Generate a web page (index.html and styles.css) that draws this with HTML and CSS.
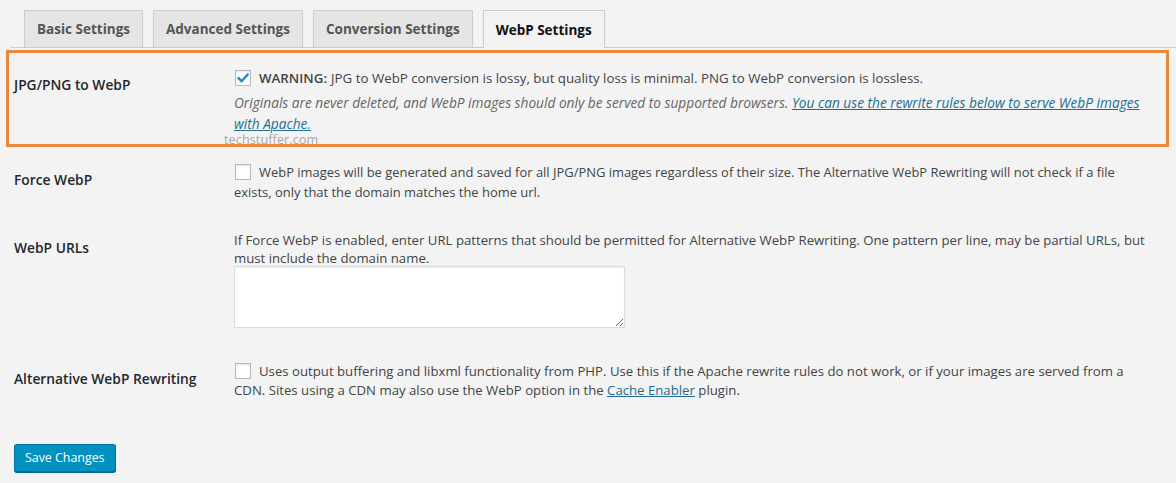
FILE: index.html
```html
<!DOCTYPE html>
<html lang="en">
<head>
<meta charset="utf-8">
<title>WebP Settings</title>
<link rel="stylesheet" href="styles.css">
</head>
<body>
<div class="page">
  <nav class="tabs">
    <a class="tab">Basic Settings</a>
    <a class="tab">Advanced Settings</a>
    <a class="tab">Conversion Settings</a>
    <a class="tab tab-active">WebP Settings</a>
  </nav>

  <div class="row row-highlight">
    <div class="label label-1">JPG/PNG to WebP</div>
    <div class="field field-1">
      <p class="line">
        <span class="cb cb-checked"><svg viewBox="0 0 16 16" width="16" height="16"><path d="M3.6 8.2 L6.6 11.2 L12.6 4.6" fill="none" stroke="#1e8cbe" stroke-width="2.4" stroke-linecap="square"/></svg></span><b class="warn">WARNING:</b> JPG to WebP conversion is lossy, but quality loss is minimal. PNG to WebP conversion is lossless.
      </p>
      <p class="desc">Originals are never deleted, and WebP images should only be served to supported browsers. <a class="link" href="#">You can use the rewrite rules below to serve WebP images<br>with Apache.</a></p>
    </div>
    <span class="watermark">techstuffer.com</span>
  </div>

  <div class="row row-2">
    <div class="label label-2">Force WebP</div>
    <div class="field field-2">
      <p class="text t2"><span class="cb"></span>WebP images will be generated and saved for all JPG/PNG images regardless of their size. The Alternative WebP Rewriting will not check if a file<br>exists, only that the domain matches the home url.</p>
    </div>
  </div>

  <div class="row row-3">
    <div class="label label-3">WebP URLs</div>
    <div class="field field-3">
      <p class="text t3">If Force WebP is enabled, enter URL patterns that should be permitted for Alternative WebP Rewriting. One pattern per line, may be partial URLs, but<br>must include the domain name.</p>
      <textarea class="urls"></textarea>
    </div>
  </div>

  <div class="row row-4">
    <div class="label label-4">Alternative WebP Rewriting</div>
    <div class="field field-4">
      <p class="text t4"><span class="cb"></span>Uses output buffering and libxml functionality from PHP. Use this if the Apache rewrite rules do not work, or if your images are served from a<br>CDN. Sites using a CDN may also use the WebP option in the <a class="link" href="#">Cache Enabler</a> plugin.</p>
    </div>
  </div>

  <div class="actions">
    <button class="btn" type="button">Save Changes</button>
  </div>
</div>
</body>
</html>
```

FILE: styles.css
```css
html, body {
  margin: 0;
  padding: 0;
  background: #f3f3f3;
}
body {
  font-family: "Open Sans", "Noto Sans", sans-serif;
  font-size: 13.2px;
  color: #444;
  width: 1176px;
  height: 483px;
  overflow: hidden;
}
p { margin: 0; }

.tabs {
  display: flex;
  gap: 10px;
  margin-left: 10px;
  padding: 10px 0 0 14px;
  border-bottom: 1px solid #ccc;
  height: 37px;
  box-sizing: content-box;
}
.tab {
  display: flex;
  align-items: center;
  box-sizing: border-box;
  height: 37px;
  padding: 0 12px 0 12px;
  border: 1px solid #ccc;
  border-bottom: none;
  background: #e5e5e5;
  color: #555;
  font-weight: 700;
  font-size: 13.5px;
  text-decoration: none;
}
.tab-active {
  background: #f3f3f3;
  color: #111;
  height: 38px;
  margin-bottom: -1px;
}

.row {
  display: grid;
  grid-template-columns: 220px 1fr;
  padding-left: 14px;
  position: relative;
}
.row-highlight {
  border: 3px solid #e8883b;
  margin: 2px 7px 0 6px;
  padding-left: 5px;
  height: 91px;
  box-sizing: content-box;
}
.label {
  color: #23282d;
  font-weight: 600;
  font-size: 13.8px;
  line-height: 20px;
}
.label-1 { padding-top: 22px; }
.field-1 { padding-top: 15px; }

.line {
  line-height: 20px;
  font-size: 13.3px;
  white-space: nowrap;
  display: flex;
  align-items: center;
}
.warn { font-weight: 600; margin-right: 4px; }

.cb {
  display: inline-block;
  box-sizing: border-box;
  width: 16px;
  height: 16px;
  border: 1px solid #b4b9be;
  background: #fff;
  box-shadow: inset 0 1px 2px rgba(0,0,0,0.1);
  margin: 0 8px 0 1px;
  vertical-align: -3px;
  flex: none;
  position: relative;
}
.cb svg {
  position: absolute;
  left: -1px;
  top: -1px;
}

.desc {
  margin-top: 4px;
  font-style: italic;
  font-size: 13.7px;
  color: #666;
  line-height: 21px;
  white-space: nowrap;
}
.link {
  color: #1f6e92;
  text-decoration: underline;
}

.watermark {
  position: absolute;
  left: 215px;
  top: 79px;
  color: #a9a9a9;
  font-size: 12.6px;
  line-height: 16px;
  letter-spacing: 0.1px;
}

.text { white-space: nowrap; }

.row-2 { height: 73px; }
.label-2 { padding-top: 23px; }
.field-2 { padding-top: 15px; }
.t2 { line-height: 20px; font-size: 12.95px; }

.row-3 { height: 142px; }
.label-3 { padding-top: 18px; }
.field-3 { padding-top: 11px; }
.t3 { line-height: 18px; }
.urls {
  display: block;
  box-sizing: border-box;
  width: 391px;
  height: 62px;
  margin: -1px 0 0 0;
  border: 1px solid #ddd;
  background: #fff;
  box-shadow: inset 0 1px 2px rgba(0,0,0,0.07);
  resize: vertical;
  font: inherit;
}

.row-4 { height: 82px; }
.label-4 { padding-top: 0; align-self: start; margin-top: 7px; }
.field-4 { padding-top: 0; }
.t4 { line-height: 19px; }

.actions {
  padding: 0 0 0 14px;
}
.btn {
  box-sizing: border-box;
  height: 28px;
  padding: 0 10px;
  background: #0091bf;
  border: 1px solid #0073aa;
  border-bottom-color: #006799;
  border-radius: 3px;
  box-shadow: 0 1px 0 #006799;
  color: #fff;
  font-family: "Open Sans", "Noto Sans", sans-serif;
  font-size: 12.4px;
  line-height: 26px;
  cursor: pointer;
}
```
